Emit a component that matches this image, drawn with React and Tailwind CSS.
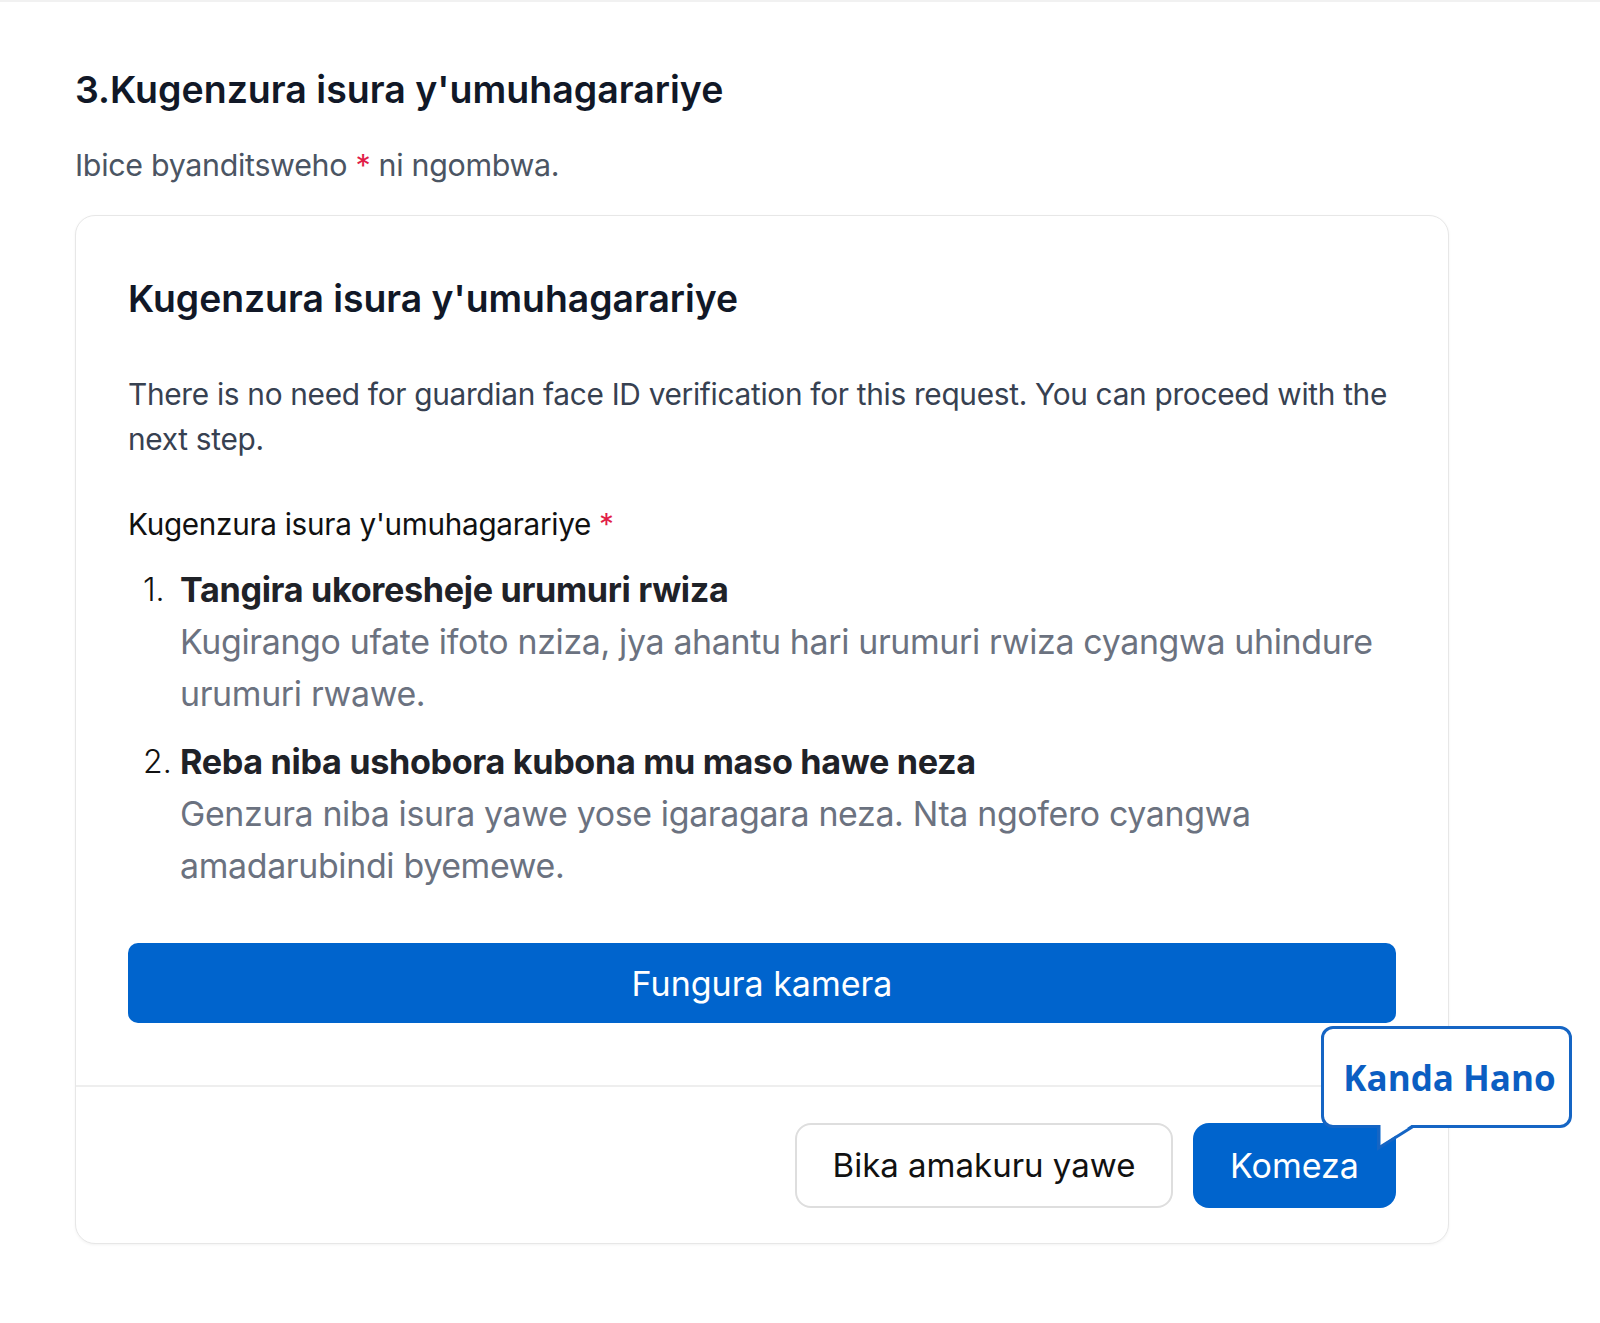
import React from "react";

const steps = [
  {
    title: "Tangira ukoresheje urumuri rwiza",
    body: "Kugirango ufate ifoto nziza, jya ahantu hari urumuri rwiza cyangwa uhindure urumuri rwawe.",
  },
  {
    title: "Reba niba ushobora kubona mu maso hawe neza",
    body: "Genzura niba isura yawe yose igaragara neza. Nta ngofero cyangwa amadarubindi byemewe.",
  },
];

const App = () => {
  return (
    <div
      className="min-h-[1323px] bg-white border-t-2 border-[#f1f1f1]"
      style={{ fontFamily: "Inter, 'Noto Sans', sans-serif" }}
    >
      <div className="pl-[75px] pr-[151px] pt-[62px]">
        {/* Section header */}
        <h1 className="text-[37.5px] leading-[52px] font-semibold text-[#111827]">
          3.Kugenzura isura y'umuhagarariye
        </h1>
        <p className="mt-[31px] text-[30.4px] leading-[36px] tracking-[-0.01em] text-[#4b5563]">
          Ibice byanditsweho <span className="text-[#e11d48]">*</span> ni ngombwa.
        </p>

        {/* Card */}
        <div className="mt-[32px] rounded-[20px] border border-[#e7e7e7] bg-white shadow-[0_1px_3px_rgba(0,0,0,0.05)]">
          <div className="px-[52px] pt-[59px] pb-[62px]">
            <h2 className="text-[37.3px] leading-[48px] font-semibold text-[#111827]">
              Kugenzura isura y'umuhagarariye
            </h2>

            <p className="mt-[49px] text-[29.8px] leading-[45px] tracking-[-0.01em] text-[#374151]">
              There is no need for guardian face ID verification for this request. You can proceed with the next step.
            </p>

            <p className="mt-[42px] text-[29.7px] leading-[40px] tracking-[-0.01em] text-[#111111]">
              Kugenzura isura y'umuhagarariye <span className="text-[#e11d48]">*</span>
            </p>

            <ol className="mt-[20px] space-y-[16px]">
              {steps.map((step, i) => (
                <li key={i} className="flex">
                  <span className="w-[52px] pl-[15px] text-[32px] leading-[52px] font-light text-[#111111]">
                    {i + 1}.
                  </span>
                  <div className="flex-1">
                    <p className="text-[34.2px] leading-[52px] font-bold tracking-[-0.01em] text-[#1f2228]">
                      {step.title}
                    </p>
                    <p className="text-[33.9px] leading-[52px] tracking-[-0.01em] text-[#6b7280]">
                      {step.body}
                    </p>
                  </div>
                </li>
              ))}
            </ol>

            <button className="mt-[51px] w-full h-[80px] rounded-[10px] bg-[#0064cd] text-white text-[34px]">
              Fungura kamera
            </button>
          </div>

          {/* Footer */}
          <div className="border-t-2 border-[#eeeeee] px-[52px] pt-[36px] pb-[35px] flex justify-end gap-[20px]">
            <button className="h-[85px] w-[378px] rounded-[16px] border-2 border-[#dedede] bg-white text-[33px] text-[#111111]">
              Bika amakuru yawe
            </button>
            <div className="relative">
              <button className="h-[85px] w-[203px] rounded-[16px] bg-[#0064cd] text-white text-[34px]">
                Komeza
              </button>

              {/* Tooltip */}
              <div className="absolute left-[128px] top-[-97px] w-[251px] h-[126px]">
                <div
                  className="h-[102px] w-full rounded-[12px] border-[3px] border-[#1565c4] bg-white flex items-center justify-center pt-[2px] pl-[6px] text-[35px] font-bold text-[#0b5ec2]"
                  style={{ fontFamily: "'Open Sans', 'Noto Sans', sans-serif" }}
                >
                  Kanda Hano
                </div>
                <svg
                  className="absolute left-[56px] top-[98px]"
                  width="40"
                  height="28"
                  viewBox="0 0 40 28"
                >
                  <polygon points="3.5,0 36,0 3.5,22" fill="#ffffff" />
                  <polyline
                    points="1.5,2 1.5,24 36,2.5"
                    fill="none"
                    stroke="#1565c4"
                    strokeWidth="3"
                    strokeLinejoin="miter"
                  />
                </svg>
              </div>
            </div>
          </div>
        </div>
      </div>
    </div>
  );
};

export default App;
